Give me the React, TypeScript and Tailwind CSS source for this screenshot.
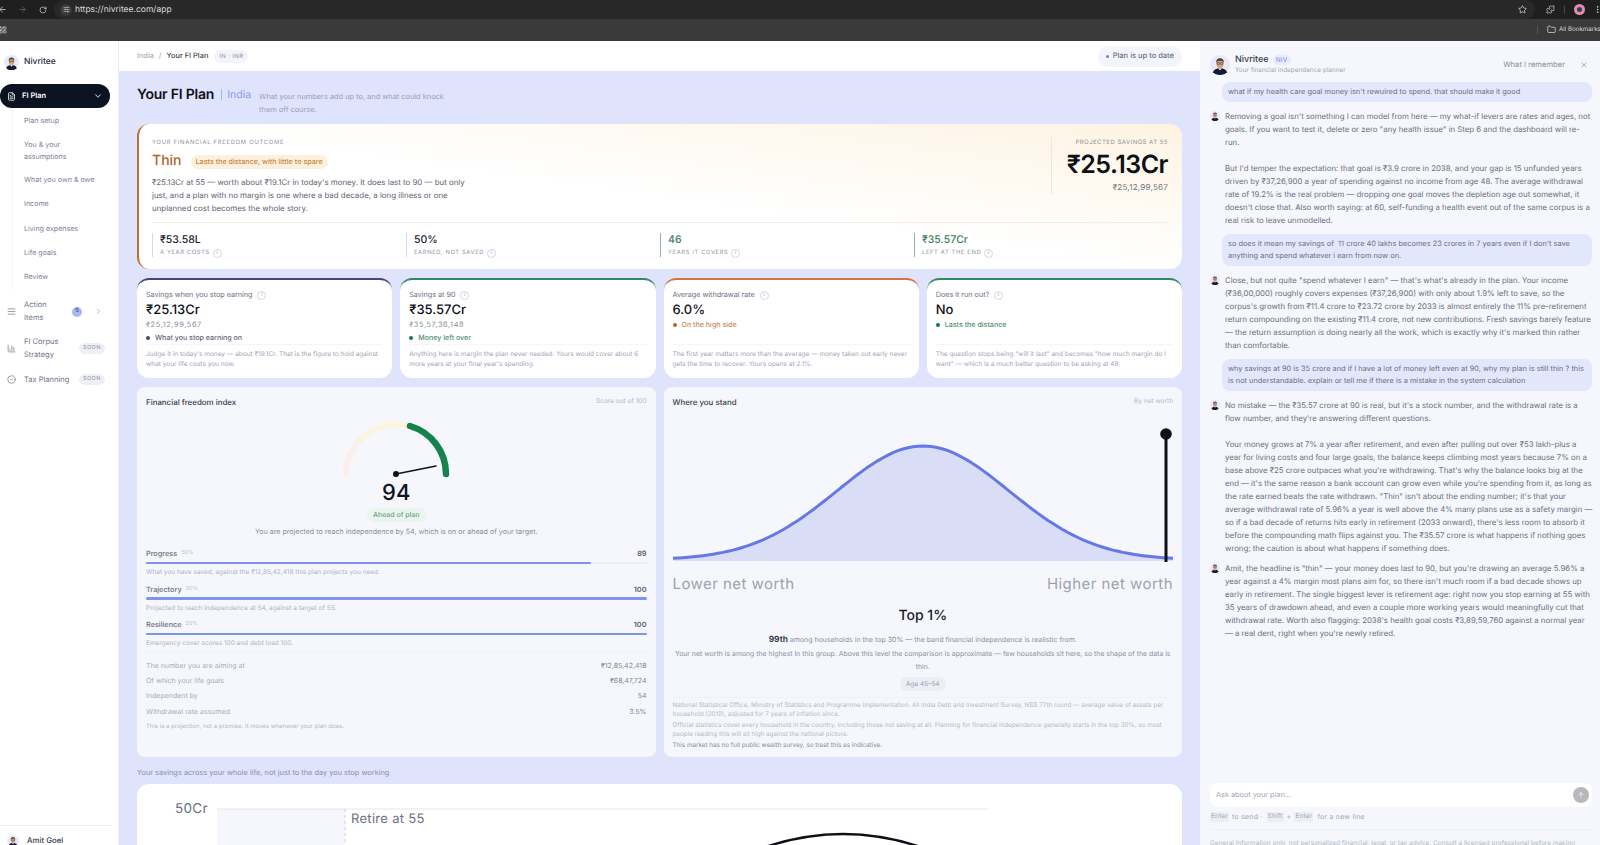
import {
  ArrowLeft,
  ArrowRight,
  ArrowUp,
  BarChart3,
  ChevronDown,
  ChevronRight,
  CircleCheck,
  FileText,
  Folder,
  LayoutGrid,
  MoreVertical,
  Puzzle,
  RotateCw,
  SlidersHorizontal,
  Star,
  X,
  AlignJustify,
} from "lucide-react";

const Avatar = ({ size }: { size: number }) => (
  <svg width={size} height={size} viewBox="0 0 24 24" className="shrink-0">
    <circle cx="12" cy="12" r="12" fill="#e6e9fb" />
    <path d="M3.5 21c1-3.6 4.4-5 8.5-5s7.500 1.400 8.500 5c-2.200 2-5 3-8.500 3s-6.300-1-8.500-3z" fill="#141a2e" />
    <path d="M10 16l2 2.600 2-2.600z" fill="#fff" />
    <ellipse cx="12" cy="10.500" rx="4.300" ry="5.600" fill="#d6a07a" />
    <path d="M7.500 9.500C7 5.500 9.500 3.800 12 3.800s5 1.700 4.500 5.700c-.6-1.800-2-2.700-4.500-2.700s-3.900.9-4.500 2.700z" fill="#4a4038" />
    <rect x="8.400" y="9" width="3" height="2.300" rx="1" fill="none" stroke="#333" strokeWidth=".6" />
    <rect x="12.600" y="9" width="3" height="2.300" rx="1" fill="none" stroke="#333" strokeWidth=".6" />
  </svg>
);

const Info = () => (
  <span className="inline-flex h-[9px] w-[9px] shrink-0 items-center justify-center rounded-full border border-[#d5d8e4] text-[5px] leading-none text-[#8b90a3]">
    i
  </span>
);

const subItems = ["Plan setup", "You & your assumptions", "What you own & owe", "Income", "Living expenses", "Life goals", "Review"];

const Soon = () => (
  <span className="rounded-full bg-[#eef0f6] px-[4px] py-[3px] text-[5.500px] leading-none tracking-[0.08em] text-[#8b90a3]">SOON</span>
);

const Sidebar = () => (
  <aside className="relative flex h-full w-[119px] shrink-0 flex-col border-r border-[#eceef5] bg-white">
    <div className="flex items-center gap-[5px] pl-[4px] pt-[14px]">
      <Avatar size={15} />
      <span className="text-[8.500px] font-medium text-[#2a2e3e]">Nivritee</span>
    </div>
    <div className="mt-[14px] flex h-[24px] w-[110px] items-center rounded-r-full rounded-l-full bg-[#0b1220] pl-[7px] pr-[7px] text-white">
      <FileText size={9} />
      <span className="ml-[6px] text-[7.500px] font-semibold">FI Plan</span>
      <ChevronDown size={10} className="ml-auto" />
    </div>
    <div className="ml-[12px] mt-[1px] flex flex-col border-l border-[#f4f5f9] pl-[11px] text-[7.100px] leading-[11.500px] text-[#7c8194]">
      {subItems.map((s) => (
        <div key={s} className={s.includes("assumptions") ? "w-[60px] py-[6px]" : "py-[6.300px]"}>
          {s}
        </div>
      ))}
    </div>
    <div className="mt-[10px] flex h-[26px] items-center pl-[7px] text-[7.500px] leading-[12.500px] text-[#6f7487]">
      <AlignJustify size={9} className="shrink-0 text-[#7c8194]" />
      <span className="ml-[8px] w-[40px]">Action Items</span>
      <span className="ml-[8px] flex h-[10px] w-[10px] items-center justify-center rounded-full bg-[#aab8f2] text-[6px] font-medium text-[#3b4475]">5</span>
      <ChevronRight size={9} className="ml-[12px] text-[#9a9fb0]" />
    </div>
    <div className="mt-[11px] flex h-[26px] items-center pl-[7px] text-[7.500px] leading-[12.500px] text-[#6f7487]">
      <BarChart3 size={9} className="shrink-0 text-[#7c8194]" />
      <span className="ml-[8px] w-[55px]">FI Corpus Strategy</span>
      <Soon />
    </div>
    <div className="mt-[11px] flex h-[14px] items-center pl-[7px] text-[7.500px] text-[#6f7487]">
      <CircleCheck size={9} className="shrink-0 text-[#7c8194]" />
      <span className="ml-[8px] w-[55px]">Tax Planning</span>
      <Soon />
    </div>
    <div className="mt-auto ml-0 mr-[7px] flex h-[20px] items-start border-t border-[#eceef5] pl-[7px] pt-[9px]">
      <Avatar size={12} />
      <span className="ml-[8px] text-[7.800px] font-medium text-[#3a3e4e]">Amit Goel</span>
    </div>
  </aside>
);

const stats = [
  { v: "₹53.58L", l: "A YEAR COSTS", bar: "border-[#d5d9ee]", c: "text-[#22242e]" },
  { v: "50%", l: "EARNED, NOT SAVED", bar: "border-[#d5d9ee]", c: "text-[#22242e]" },
  { v: "46", l: "YEARS IT COVERS", bar: "border-[#8fb5a2]", c: "text-[#3f7d5e]" },
  { v: "₹35.57Cr", l: "LEFT AT THE END", bar: "border-[#8fb5a2]", c: "text-[#3f7d5e]" },
];

const Hero = () => (
  <section className="flex h-[145px] flex-col rounded-xl border-l-2 border-[#b9733a] bg-gradient-to-tr from-white from-50% to-[#fdf3e2] pl-[13px] pr-[14px] pt-[13px]">
    <div className="flex h-[85px]">
      <div className="w-[325px]">
        <div className="text-[5.800px] leading-[12px] tracking-[0.13em] text-[#8b8f9c]">YOUR FINANCIAL FREEDOM OUTCOME</div>
        <div className="mt-[2px] flex items-center gap-[9px]">
          <span className="text-[14px] font-medium leading-[20px] text-[#a8662c]">Thin</span>
          <span className="mt-[2px] rounded-full bg-[#fdf1de] px-[5px] py-[3px] text-[7.200px] font-medium leading-none text-[#c9853f]">Lasts the distance, with little to spare</span>
        </div>
        <p className="mt-[5px] text-[7.900px] leading-[13px] text-[#5e6270]">
          ₹25.13Cr at 55 — worth about ₹19.1Cr in today's money. It does last to 90 — but only just, and a plan with no margin is one where a bad decade, a long illness or one unplanned cost becomes the whole story.
        </p>
      </div>
      <div className="ml-auto flex h-[57px] w-[117px] flex-col items-end border-l border-[#ece8de] text-right">
        <div className="text-[6px] leading-[12px] tracking-[0.08em] text-[#8b8f9c]">PROJECTED SAVINGS AT 55</div>
        <div className="text-[25px] font-semibold leading-[32px] tracking-[-0.02em] text-[#0e1018]">₹25.13Cr</div>
        <div className="mt-[1px] text-[8px] leading-[10px] tracking-[0.03em] text-[#6b6f7c]">₹25,12,99,567</div>
      </div>
    </div>
    <div className="grid grid-cols-4 border-t border-[#efeee9] pt-[10px]">
      {stats.map((s) => (
        <div key={s.l} className={`h-[24px] border-l ${s.bar} pl-[7px]`}>
          <div className={`text-[10.500px] font-medium leading-[13px] ${s.c}`}>{s.v}</div>
          <div className="mt-[2px] flex items-center gap-[3px] text-[5.800px] leading-[10px] tracking-[0.11em] text-[#90949f]">
            {s.l}
            <Info />
          </div>
        </div>
      ))}
    </div>
  </section>
);

const cards = [
  { label: "Savings when you stop earning", v: "₹25.13Cr", sub: "₹25,12,99,567", dot: "bg-[#4c4570]", tag: "What you stop earning on", tc: "text-[#5f6272]", top: "border-[#4c4570]", note: "Judge it in today's money — about ₹19.1Cr. That is the figure to hold against what your life costs you now." },
  { label: "Savings at 90", v: "₹35.57Cr", sub: "₹35,57,36,148", dot: "bg-[#15784a]", tag: "Money left over", tc: "text-[#4f8f70]", top: "border-[#2f8a66]", note: "Anything here is margin the plan never needed. Yours would cover about 6 more years at your final year's spending." },
  { label: "Average withdrawal rate", v: "6.0%", dot: "bg-[#b9651f]", tag: "On the high side", tc: "text-[#c08a5c]", top: "border-[#d0734b]", note: "The first year matters more than the average — money taken out early never gets the time to recover. Yours opens at 2.1%." },
  { label: "Does it run out?", v: "No", dot: "bg-[#15784a]", tag: "Lasts the distance", tc: "text-[#4f8f70]", top: "border-[#2f8a66]", note: "The question stops being \"will it last\" and becomes \"how much margin do I want\" — which is a much better question to be asking at 48." },
];

const Cards = () => (
  <div className="mt-[9px] grid h-[100px] grid-cols-4 gap-[8px]">
    {cards.map((c) => (
      <div key={c.label} className={`flex flex-col rounded-xl border-t-2 ${c.top} bg-white px-[9px] pb-[9px] pt-[9px]`}>
        <div className="flex items-center gap-[5px] text-[7.200px] leading-[12px] text-[#6b6f7f]">
          {c.label}
          <Info />
        </div>
        <div className="mt-[1px] text-[13px] font-medium leading-[17px] text-[#0e1018]">{c.v}</div>
        {c.sub && <div className="text-[7.400px] leading-[11px] tracking-[0.08em] text-[#8a8e9c]">{c.sub}</div>}
        <div className={`${c.sub ? "mt-[2px]" : "mt-0"} flex items-center gap-[5px] text-[7.100px] font-medium leading-[11px] ${c.tc}`}>
          <span className={`h-[4px] w-[4px] rounded-full ${c.dot}`} />
          {c.tag}
        </div>
        <div className="mt-auto border-t border-[#f5f6fa] pt-[4px] text-[6.500px] leading-[10px] text-[#a2a6b4]">{c.note}</div>
      </div>
    ))}
  </div>
);

const Gauge = () => (
  <svg width="120" height="70" viewBox="0 0 120 70" className="mx-auto mt-[6px] block">
    <path d="M10 60A50 50 0 0 1 25 25" fill="none" stroke="#fceeeb" strokeWidth="6" strokeLinecap="round" />
    <path d="M25 25A50 50 0 0 1 73 12" fill="none" stroke="#fdf4df" strokeWidth="6" strokeLinecap="round" />
    <path d="M74 12A50 50 0 0 1 110 60" fill="none" stroke="#15824c" strokeWidth="6.500" strokeLinecap="round" />
    <line x1="60" y1="60" x2="100" y2="52" stroke="#111" strokeWidth="1.500" strokeLinecap="round" />
    <circle cx="60" cy="60" r="3" fill="#111" />
  </svg>
);

const bars = [
  { n: "Progress", w: "50%", v: 89, bar: "w-[89%]", note: "What you have saved, against the ₹12,85,42,418 this plan projects you need." },
  { n: "Trajectory", w: "30%", v: 100, bar: "w-full", note: "Projected to reach independence at 54, against a target of 55." },
  { n: "Resilience", w: "20%", v: 100, bar: "w-full", note: "Emergency cover scores 100 and debt load 100." },
];

const rows = [
  ["The number you are aiming at", "₹12,85,42,418"],
  ["Of which your life goals", "₹68,47,724"],
  ["Independent by", "54"],
  ["Withdrawal rate assumed", "3.5%"],
];

const IndexPanel = () => (
  <div className="rounded-lg bg-[#f5f7fc] px-[9px] pt-[9px]">
    <div className="flex items-center justify-between">
      <span className="text-[7.900px] font-medium leading-[12px] text-[#3a3e4e]">Financial freedom index</span>
      <span className="text-[6.500px] text-[#b3b7c4]">Score out of 100</span>
    </div>
    <Gauge />
    <div className="-mt-[4px] text-center text-[22px] font-medium leading-[26px] text-[#111420]">94</div>
    <div className="mt-[2px] flex justify-center">
      <span className="rounded-full bg-[#e9f5ee] px-[6px] py-[3px] text-[7px] font-medium leading-[8px] text-[#6ba386]">Ahead of plan</span>
    </div>
    <div className="mt-[4px] text-center text-[7.100px] leading-[12px] text-[#8a8e9e]">You are projected to reach independence by 54, which is on or ahead of your target.</div>
    <div className="mt-[10px] flex flex-col">
      {bars.map((b) => (
        <div key={b.n} className="mb-[4.500px] h-[31px]">
          <div className="flex items-center text-[7.300px] font-medium leading-[11px] text-[#6b6f7f]">
            {b.n}
            <span className="ml-[4px] text-[5.500px] font-normal text-[#bcc0cc]">{b.w}</span>
            <span className="ml-auto font-semibold text-[#5a5e6e]">{b.v}</span>
          </div>
          <div className="mt-[2.500px] h-[2.500px] rounded-full bg-[#eceef5]">
            <div className={`h-full rounded-full bg-[#7f93ef] ${b.bar}`} />
          </div>
          <div className="mt-[3px] text-[6.500px] leading-[11px] text-[#b0b4c2]">{b.note}</div>
        </div>
      ))}
    </div>
    <div className="-mt-[3px] flex flex-col border-t border-[#f0f1f6] pt-[6px]">
      {rows.map(([k, v]) => (
        <div key={k} className="flex h-[15.300px] items-center justify-between text-[7px] text-[#a8acba]">
          <span>{k}</span>
          <span className="text-[#84889a]">{v}</span>
        </div>
      ))}
    </div>
    <div className="text-[6px] leading-[14px] text-[#b6bac6]">This is a projection, not a promise. It moves whenever your plan does.</div>
  </div>
);

const curve = () => {
  const pts: string[] = [];
  for (let x = 0; x <= 500; x += 5) {
    const y = 132 - 114 * Math.exp(-((x - 250) ** 2) / (2 * 86 * 86));
    pts.push(`${x === 0 ? "M" : "L"}${x} ${y.toFixed(1)}`);
  }
  return pts.join(" ");
};

const StandPanel = () => (
  <div className="rounded-lg bg-[#f5f7fc] px-[9px] pt-[9px]">
    <div className="flex items-center justify-between">
      <span className="text-[7.900px] font-medium leading-[12px] text-[#3a3e4e]">Where you stand</span>
      <span className="text-[6.500px] text-[#b3b7c4]">By net worth</span>
    </div>
    <svg width="500" height="136" viewBox="0 0 500 136" className="mt-[20px] block overflow-visible">
      <path d={`${curve()} V133 H0 Z`} fill="#d9def6" />
      <path d={curve()} fill="none" stroke="#6678e8" strokeWidth="3" />
      <line x1="493" y1="6" x2="493" y2="134" stroke="#0e1018" strokeWidth="3" />
      <circle cx="493" cy="6" r="5.800" fill="#0e1018" />
    </svg>
    <div className="mt-[10px] flex justify-between text-[15px] leading-[20px] tracking-[0.03em] text-[#9ea2b0]">
      <span>Lower net worth</span>
      <span>Higher net worth</span>
    </div>
    <div className="mt-[12px] text-center text-[14px] font-medium leading-[20px] text-[#16182a]">Top 1%</div>
    <div className="mt-[7px] text-center text-[7px] leading-[14px] text-[#8a8e9e]">
      <span className="text-[8.500px] font-semibold text-[#2a2e3e]">99th</span> among households in the top 30% — the band financial independence is realistic from.
    </div>
    <p className="text-center text-[6.900px] leading-[13.300px] text-[#8a8e9e]">Your net worth is among the highest in this group. Above this level the comparison is approximate — few households sit here, so the shape of the data is thin.</p>
    <div className="mt-[3px] flex justify-center">
      <span className="rounded-full bg-[#eceef5] px-[6px] py-[3px] text-[6.500px] leading-[8px] text-[#9a9eae]">Age 45–54</span>
    </div>
    <div className="mt-[6px] border-t border-[#f0f1f6] pt-[3px] text-[6.300px] leading-[9px] text-[#b6bac6]">
      <p>National Statistical Office, Ministry of Statistics and Programme Implementation. All India Debt and Investment Survey, NSS 77th round — average value of assets per household (2019), adjusted for 7 years of inflation since.</p>
      <p className="mt-[2px]">Official statistics cover every household in the country, including those not saving at all. Planning for financial independence generally starts in the top 30%, so most people reading this will sit high against the national picture.</p>
      <p className="mt-[2px] text-[#8a8e9e]">This market has no full public wealth survey, so treat this as indicative.</p>
    </div>
  </div>
);

const SavingsChart = () => (
  <div className="mt-[5px] h-[70px] rounded-t-xl bg-white">
    <svg width="1045" height="62" viewBox="0 0 1045 62" className="block">
      <rect x="80" y="25" width="128" height="40" fill="#f5f7fc" />
      <line x1="80" y1="25" x2="851" y2="25" stroke="#e4e6ee" />
      <line x1="208" y1="25" x2="208" y2="62" stroke="#c9cff3" strokeDasharray="3 3" />
      <text x="38" y="29" fontSize="13.500" fill="#6b6f7f" letterSpacing=".3">50Cr</text>
      <text x="214" y="39" fontSize="13" fill="#6b6f7f" letterSpacing=".3">Retire at 55</text>
      <path d="M620 66 Q706 34 792 66" fill="none" stroke="#0e1018" strokeWidth="2.500" />
    </svg>
  </div>
);

const Main = () => (
  <main className="flex h-full min-w-0 flex-1 flex-col overflow-hidden bg-[#dfe3fb]">
    <header className="flex h-[30px] shrink-0 items-center bg-white pl-[18px] pr-[18px] text-[7.400px]">
      <span className="text-[#9a9eae]">India</span>
      <span className="ml-[5px] text-[#9a9eae]">/</span>
      <span className="ml-[5px] font-medium text-[#3a3e4e]">Your FI Plan</span>
      <span className="ml-[6px] rounded-full bg-[#f3f4fa] px-[5px] py-[3px] text-[6px] leading-[7px] tracking-[0.06em] text-[#8a8e9e]">IN · INR</span>
      <span className="ml-auto flex h-[21px] items-center gap-[4px] rounded-full bg-[#f3f5fc] pl-[8px] pr-[8px] text-[7.500px] font-medium text-[#6b6f7f]">
        <span className="h-[3px] w-[3px] rounded-full bg-[#6a7cf0]" />
        Plan is up to date
      </span>
    </header>
    <div className="min-h-0 flex-1 pl-[18px] pr-[18px] pt-[13px]">
      <div className="flex h-[40px] items-start">
        <h1 className="mt-[1px] text-[14px] font-semibold leading-[20px] tracking-[-0.015em] text-[#0e1018]">Your FI Plan</h1>
        <span className="ml-[7px] mt-[5px] h-[11px] border-l border-[#aab4ec]" />
        <span className="ml-[5px] mt-[3px] text-[10.500px] leading-[16px] text-[#8a9df2]">India</span>
        <p className="ml-[8px] mt-[7px] w-[190px] text-[7.400px] leading-[12.500px] text-[#9a9fb8]">What your numbers add up to, and what could knock them off course.</p>
      </div>
      <Hero />
      <Cards />
      <div className="mt-[9px] grid h-[370px] grid-cols-2 gap-[8px]">
        <IndexPanel />
        <StandPanel />
      </div>
      <div className="mt-[10px] text-[7.400px] leading-[12px] text-[#8a8fa8]">Your savings across your whole life, not just to the day you stop working</div>
      <SavingsChart />
    </div>
  </main>
);

const Msg = ({ children }: { children: React.ReactNode }) => (
  <div className="mt-[7.200px] flex">
    <div className="w-[15px] shrink-0 pt-[1px]">
      <Avatar size={10} />
    </div>
    <div className="w-[367px] whitespace-pre text-[7.800px] leading-[13px] text-[#6b6f7f]">{children}</div>
  </div>
);

const Bubble = ({ children }: { children: React.ReactNode }) => (
  <div className="ml-[12px] mt-[7.200px] whitespace-pre rounded-lg bg-[#e3e7fb] px-[6px] py-[4px] text-[7.400px] leading-[12.300px] text-[#6b6f7f]">{children}</div>
);

const Chat = () => (
  <aside className="flex h-full w-[400px] shrink-0 flex-col overflow-hidden bg-[#f5f7fc] pl-[10px] pr-[8px]">
    <div className="flex items-center pt-[13px]">
      <Avatar size={20} />
      <div className="ml-[5px]">
        <div className="flex items-center gap-[4px]">
          <span className="text-[9px] font-medium leading-[11px] text-[#3a3e4e]">Nivritee</span>
          <span className="rounded-full bg-[#e8ebfb] px-[3px] py-[1px] text-[6.500px] leading-[8px] tracking-[0.04em] text-[#7c8ce0]">NIV</span>
        </div>
        <div className="mt-[1px] text-[6.400px] leading-[9px] text-[#a2a6b4]">Your financial independence planner</div>
      </div>
      <span className="ml-auto text-[7.600px] text-[#8a8e9e]">What I remember</span>
      <X size={8} className="ml-[15px] mr-[4px] text-[#8a8e9e]" />
    </div>
    <Bubble>what if my health care goal money isn't rewuired to spend. that should make it good</Bubble>
    <Msg>{"Removing a goal isn't something I can model from here — my what-if levers are rates and ages, not\ngoals. If you want to test it, delete or zero \"any health issue\" in Step 6 and the dashboard will re-\nrun.\n\nBut I'd temper the expectation: that goal is ₹3.9 crore in 2038, and your gap is 15 unfunded years\ndriven by ₹37,26,900 a year of spending against no income from age 48. The average withdrawal\nrate of 19.2% is the real problem — dropping one goal moves the depletion age out somewhat, it\ndoesn't close that. Also worth saying: at 60, self-funding a health event out of the same corpus is a\nreal risk to leave unmodelled."}</Msg>
    <Bubble>{"so does it mean my savings of  11 crore 40 lakhs becomes 23 crores in 7 years even if I don't save\nanything and spend whatever i earn from now on."}</Bubble>
    <Msg>{"Close, but not quite \"spend whatever I earn\" — that's what's already in the plan. Your income\n(₹36,00,000) roughly covers expenses (₹37,26,900) with only about 1.9% left to save, so the\ncorpus's growth from ₹11.4 crore to ₹23.72 crore by 2033 is almost entirely the 11% pre-retirement\nreturn compounding on the existing ₹11.4 crore, not new contributions. Fresh savings barely feature\n— the return assumption is doing nearly all the work, which is exactly why it's marked thin rather\nthan comfortable."}</Msg>
    <Bubble>{"why savings at 90 is 35 crore and if I have a lot of money left even at 90, why my plan is still thin ? this\nis not understandable. explain or tell me if there is a mistake in the system calculation"}</Bubble>
    <Msg>{"No mistake — the ₹35.57 crore at 90 is real, but it's a stock number, and the withdrawal rate is a\nflow number, and they're answering different questions.\n\nYour money grows at 7% a year after retirement, and even after pulling out over ₹53 lakh-plus a\nyear for living costs and four large goals, the balance keeps climbing most years because 7% on a\nbase above ₹25 crore outpaces what you're withdrawing. That's why the balance looks big at the\nend — it's the same reason a bank account can grow even while you're spending from it, as long as\nthe rate earned beats the rate withdrawn. \"Thin\" isn't about the ending number; it's that your\naverage withdrawal rate of 5.96% a year is well above the 4% many plans use as a safety margin —\nso if a bad decade of returns hits early in retirement (2033 onward), there's less room to absorb it\nbefore the compounding math flips against you. The ₹35.57 crore is what happens if nothing goes\nwrong; the caution is about what happens if something does."}</Msg>
    <Msg>{"Amit, the headline is \"thin\" — your money does last to 90, but you're drawing an average 5.96% a\nyear against a 4% margin most plans aim for, so there isn't much room if a bad decade shows up\nearly in retirement. The single biggest lever is retirement age: right now you stop earning at 55 with\n35 years of drawdown ahead, and even a couple more working years would meaningfully cut that\nwithdrawal rate. Worth also flagging: 2038's health goal costs ₹3,89,59,760 against a normal year\n— a real dent, right when you're newly retired."}</Msg>
    <div className="mt-auto flex h-[24px] shrink-0 items-center rounded-lg bg-white pl-[6px] pr-[3px] text-[7.300px] text-[#a2a6b4]">
      Ask about your plan...
      <span className="ml-auto flex h-[16px] w-[16px] items-center justify-center rounded-full bg-[#b8b8bc] text-white">
        <ArrowUp size={8} />
      </span>
    </div>
    <div className="mt-[5px] flex h-[10px] shrink-0 items-center text-[7px] tracking-[0.03em] text-[#a2a6b4]">
      <span className="rounded-[2px] bg-[#eceef5] px-[1px] text-[6.500px]">Enter</span>
      <span className="ml-[3px]">to send ·</span>
      <span className="ml-[4px] rounded-[2px] bg-[#eceef5] px-[1px] text-[6.500px]">Shift</span>
      <span className="mx-[3px]">+</span>
      <span className="rounded-[2px] bg-[#eceef5] px-[1px] text-[6.500px]">Enter</span>
      <span className="ml-[4px]">for a new line</span>
    </div>
    <div className="mt-[7px] h-[16px] shrink-0 overflow-hidden whitespace-nowrap border-t border-[#eef0f6] pt-[8.500px] text-[6.500px] leading-[9px] text-[#b3b7c4]">
      General information only, not personalized financial, legal, or tax advice. Consult a licensed professional before making
    </div>
  </aside>
);

const Browser = () => (
  <div className="shrink-0 overflow-hidden text-[#d8d8d8]">
    <div className="flex h-[19px] items-center bg-[#1f1f1f]">
      <ArrowLeft size={9} className="-ml-[2px]" />
      <ArrowRight size={9} className="ml-[11px] text-[#6a6a6a]" />
      <RotateCw size={8} className="ml-[12px]" />
      <div className="ml-[7px] flex h-[19px] min-w-0 flex-1 items-center rounded-full bg-[#282828] pl-[6px]">
        <span className="flex h-[12px] w-[12px] items-center justify-center rounded-full bg-[#3a3a3a]">
          <SlidersHorizontal size={7} />
        </span>
        <span className="ml-[3px] mt-[1px] text-[8.500px] text-[#dcdcdc]">https://nivritee.com/app</span>
        <Star size={9} className="ml-auto mr-[8px]" />
      </div>
      <Puzzle size={9} className="ml-[11px]" />
      <span className="ml-[9px] h-[8px] border-l border-[#4a4a4a]" />
      <span className="ml-[9px] flex h-[11px] w-[11px] items-center justify-center rounded-full bg-[#e88aa5]">
        <span className="h-[5px] w-[5px] rounded-full bg-[#23406e]" />
      </span>
      <MoreVertical size={9} className="ml-[8px] -mr-[2px]" />
    </div>
    <div className="flex h-[22px] items-center bg-[#3a3a3a]">
      <LayoutGrid size={8} className="-ml-[1px]" />
      <div className="ml-auto flex w-[63px] shrink-0 items-center">
        <span className="h-[9px] border-l border-[#555]" />
        <Folder size={9} className="ml-[9px] shrink-0" />
        <span className="ml-[3px] whitespace-nowrap text-[6.200px]">All Bookmarks</span>
      </div>
    </div>
  </div>
);

export default function App() {
  return (
    <div className="flex h-[845px] w-[1600px] flex-col overflow-hidden bg-white [font-family:Inter,sans-serif] [text-rendering:geometricPrecision]">
      <Browser />
      <div className="flex min-h-0 flex-1">
        <Sidebar />
        <Main />
        <Chat />
      </div>
    </div>
  );
}
